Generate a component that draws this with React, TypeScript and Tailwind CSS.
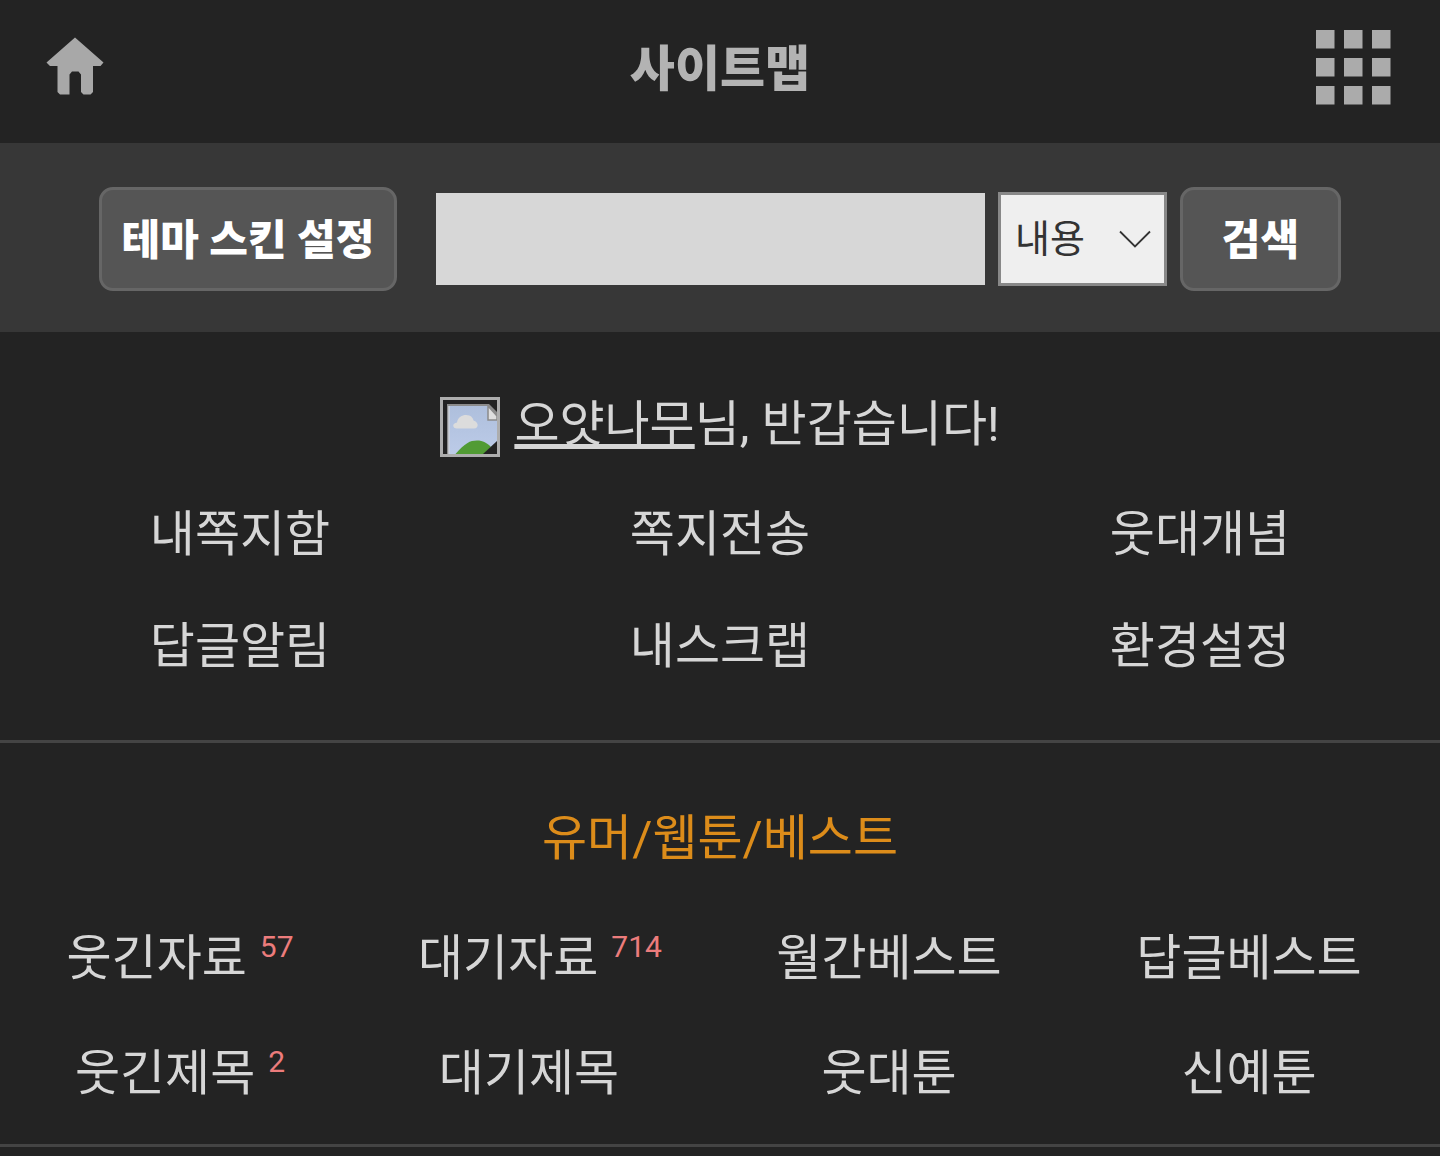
import React, { useState, FormEvent } from "react";

type MenuItem = {
  label: string;
  count?: number;
};

const MY_MENU: MenuItem[] = [
  { label: "내쪽지함" },
  { label: "쪽지전송" },
  { label: "웃대개념" },
  { label: "답글알림" },
  { label: "내스크랩" },
  { label: "환경설정" },
];

// count 0 keeps the space of the counter but shows no number
const BEST_MENU: MenuItem[] = [
  { label: "웃긴자료", count: 57 },
  { label: "대기자료", count: 714 },
  { label: "월간베스트", count: 0 },
  { label: "답글베스트", count: 0 },
  { label: "웃긴제목", count: 2 },
  { label: "대기제목", count: 0 },
  { label: "웃대툰", count: 0 },
  { label: "신예툰", count: 0 },
];

function HomeIcon() {
  return (
    <svg viewBox="0 3 60 60" className="size-[60px] overflow-visible" fill="#a8a8a8" aria-hidden="true">
      <path d="M30 2.5 L58.5 27.5 L55.5 31 H48 V57 L45.5 59.5 H38.5 L36 57 V39.5 L33.5 36.5 H27 L24.5 39.5 V59.5 H15 L12.5 57 V31 H5 L1.5 27.5 Z" />
    </svg>
  );
}

function GridIcon() {
  const cells = [0, 28, 56];
  return (
    <svg viewBox="0 0 75 75" className="size-[75px]" fill="#ababab" aria-hidden="true">
      {cells.map((y) =>
        cells.map((x) => <rect key={`${x}-${y}`} x={x} y={y} width="18.5" height="18.5" />)
      )}
    </svg>
  );
}

// Placeholder shown for a member without a loaded icon
function MemberIcon() {
  return (
    <svg viewBox="0 0 60 60" className="size-[60px] shrink-0" aria-hidden="true">
      <defs>
        <linearGradient id="sky" x1="0" y1="0" x2="0" y2="1">
          <stop offset="0" stopColor="#aebfdc" />
          <stop offset="1" stopColor="#bccbe8" />
        </linearGradient>
      </defs>
      <path d="M7 57 V7 H49 L57 15 V57 Z" fill="#8b8b8b" />
      <path d="M9 57 V9 H48 V23 H57 V57 Z" fill="url(#sky)" />
      <path d="M9 57 V9" stroke="#d0d4dc" strokeWidth="1.5" />
      <path d="M48 9 L57 19 V23 H48 Z" fill="#dedede" stroke="#8b8b8b" strokeWidth="1.5" />
      <path
        d="M17 31.5 C12 31.5 12 26 17 25.5 C18 20 22 18 26 18 C31 18 33 21 33.5 23.5 C39 25 39 31.5 34 31.5 Z"
        fill="#dcdcdc"
      />
      <path d="M15.5 57 C25 46 30 43.5 37 43.5 C43 43.5 47 46 51 50 L44 57 Z" fill="#519b34" />
      <path d="M43 57 L57 44 V57 Z" fill="#232323" />
      <rect x="1.5" y="1.5" width="57" height="57" fill="none" stroke="#adadad" strokeWidth="3" />
    </svg>
  );
}

function MenuLink({ label, count }: MenuItem) {
  return (
    <a href="#" className="flex items-center justify-center pt-1 whitespace-nowrap">
      {label}
      {count === 0 && <span className="w-[22px]" />}
      {!!count && (
        <span className="mb-6 ml-[13px] text-[30px] leading-none text-[#ec7c7c]">{count}</span>
      )}
    </a>
  );
}

export default function App(): React.JSX.Element {
  const [keyword, setKeyword] = useState<string>("");
  const [target, setTarget] = useState<string>("content");

  const handleSearch = (e: FormEvent) => {
    e.preventDefault();
  };

  return (
    <div className="min-h-screen bg-[#232323] font-[Roboto,'Noto_Sans_CJK_KR',sans-serif] text-[49px] leading-[72px] text-[#d6d6d6]">
      <header className="flex h-[143px] items-center justify-between px-[45px] pb-2">
        <a href="#" aria-label="홈" className="flex w-[79px]">
          <HomeIcon />
        </a>
        <h1 className="pt-1 font-black text-[#b3b3b3]">사이트맵</h1>
        <button type="button" aria-label="메뉴" className="flex w-[79px]">
          <GridIcon />
        </button>
      </header>

      <form
        onSubmit={handleSearch}
        className="flex h-[189px] items-center bg-[#373737] px-[99px] pt-0.5 text-[42px]"
      >
        <button
          type="button"
          className="mr-[39px] h-[104px] w-[298px] shrink-0 rounded-[14px] border-3 border-[#666] bg-[#555] pt-1 font-black whitespace-nowrap text-white"
        >
          테마 스킨 설정
        </button>
        <input
          type="text"
          aria-label="검색어"
          value={keyword}
          onChange={(e) => setKeyword(e.target.value)}
          className="h-[92px] min-w-0 flex-1 bg-[#d7d7d7] px-4 text-[#333] outline-none"
        />
        <div className="relative mx-[13px] shrink-0">
          <select
            aria-label="검색 대상"
            value={target}
            onChange={(e) => setTarget(e.target.value)}
            className="block h-[94px] w-[169px] appearance-none border-3 border-[#888] bg-[#efefef] pl-[14px] text-[38px] text-[#333]"
          >
            <option value="content">내용</option>
            <option value="title">제목</option>
          </select>
          <svg
            viewBox="0 0 32 18"
            className="pointer-events-none absolute top-[38px] right-4 h-[18px] w-8"
            fill="none"
            stroke="#333"
            strokeWidth="1.8"
            aria-hidden="true"
          >
            <path d="M1 1.5 L16 16.5 L31 1.5" />
          </svg>
        </div>
        <button
          type="submit"
          className="h-[104px] w-[161px] shrink-0 rounded-[14px] border-3 border-[#666] bg-[#555] pt-1 font-black text-white"
        >
          검색
        </button>
      </form>

      <section className="border-b-3 border-[#444] pt-[57px] pb-[39px]">
        <p className="mb-4 flex items-start justify-center">
          <span className="mt-2 mr-[14px]">
            <MemberIcon />
          </span>
          <span>
            <a
              href="#"
              className="underline decoration-[5px] underline-offset-[3px] [text-decoration-skip-ink:none]"
            >
              오얏나무
            </a>
            님, 반갑습니다!
          </span>
        </p>
        <nav className="grid auto-rows-[112px] grid-cols-3">
          {MY_MENU.map((item) => (
            <MenuLink key={item.label} {...item} />
          ))}
        </nav>
      </section>

      <section className="border-b-3 border-[#444] pt-[60px] pb-[15px]">
        <h2 className="mb-6 text-center text-[#dc8c1a]">유머/웹툰/베스트</h2>
        <nav className="grid auto-rows-[115px] grid-cols-4">
          {BEST_MENU.map((item) => (
            <MenuLink key={item.label} {...item} />
          ))}
        </nav>
      </section>
    </div>
  );
}
